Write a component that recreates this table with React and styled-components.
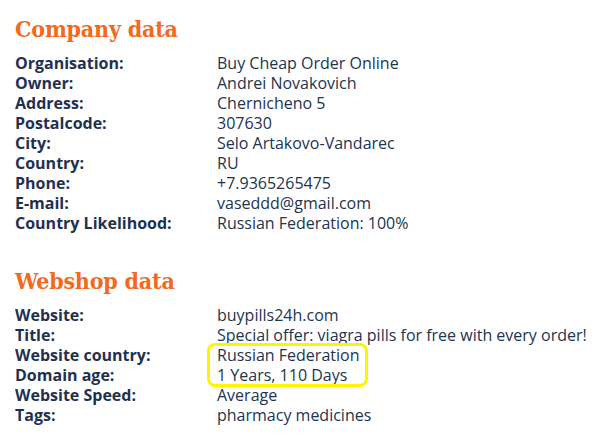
import React from 'react';
import styled, { createGlobalStyle } from 'styled-components';

const GlobalStyle = createGlobalStyle`
  body {
    margin: 0;
    background: #fff;
    font-family: "Open Sans", "Liberation Sans", sans-serif;
  }
`;

const Page = styled.div`
  padding: 12px 15px 0 15px;
`;

const Heading = styled.h2`
  margin: 0 0 7px 0;
  font-family: "DejaVu Serif Condensed", "DejaVu Serif", serif;
  font-stretch: condensed;
  font-weight: bold;
  font-size: 23px;
  line-height: 34px;
  letter-spacing: -0.2px;
  color: #f26a1b;
`;

const Section = styled.section`
  margin-bottom: ${props => props.gap || 0}px;
`;

const Table = styled.div`
  display: grid;
  grid-template-columns: 202px auto;
  justify-content: start;
  font-size: 16px;
  line-height: 20px;
  color: #1f3150;
`;

const Label = styled.div`
  font-weight: 700;
`;

const Value = styled.div`
  font-weight: 400;
  color: #23344f;
`;

const Highlight = styled.div`
  grid-column: 1 / span 2;
  display: grid;
  grid-template-columns: 202px auto;
  justify-content: start;
`;

const Marked = styled.div`
  grid-column: 2;
  grid-row: 1 / span 2;
  position: relative;
  &::after {
    content: '';
    position: absolute;
    box-sizing: border-box;
    left: -10px;
    top: -2px;
    width: 161px;
    height: 44px;
    border: 3px solid #fbf500;
    border-radius: 8px;
  }
`;

const company = [
  ['Organisation:', 'Buy Cheap Order Online'],
  ['Owner:', 'Andrei Novakovich'],
  ['Address:', 'Chernicheno 5'],
  ['Postalcode:', '307630'],
  ['City:', 'Selo Artakovo-Vandarec'],
  ['Country:', 'RU'],
  ['Phone:', '+7.9365265475'],
  ['E-mail:', 'vaseddd@gmail.com'],
  ['Country Likelihood:', 'Russian Federation: 100%']
];

const Rows = ({ rows }) =>
  rows.map(([k, v]) => (
    <React.Fragment key={k}>
      <Label>{k}</Label>
      <Value>{v}</Value>
    </React.Fragment>
  ));

const App = () => (
  <>
    <GlobalStyle />
    <Page>
      <Section gap={31}>
        <Heading>Company data</Heading>
        <Table>
          <Rows rows={company} />
        </Table>
      </Section>
      <Section>
        <Heading>Webshop data</Heading>
        <Table>
          <Rows
            rows={[
              ['Website:', 'buypills24h.com'],
              ['Title:', 'Special offer: viagra pills for free with every order!']
            ]}
          />
          <Highlight>
            <Label>Website country:</Label>
            <Marked>
              <Value>Russian Federation</Value>
              <Value>1 Years, 110 Days</Value>
            </Marked>
            <Label>Domain age:</Label>
          </Highlight>
          <Rows
            rows={[
              ['Website Speed:', 'Average'],
              ['Tags:', 'pharmacy medicines']
            ]}
          />
        </Table>
      </Section>
    </Page>
  </>
);

export default App;
